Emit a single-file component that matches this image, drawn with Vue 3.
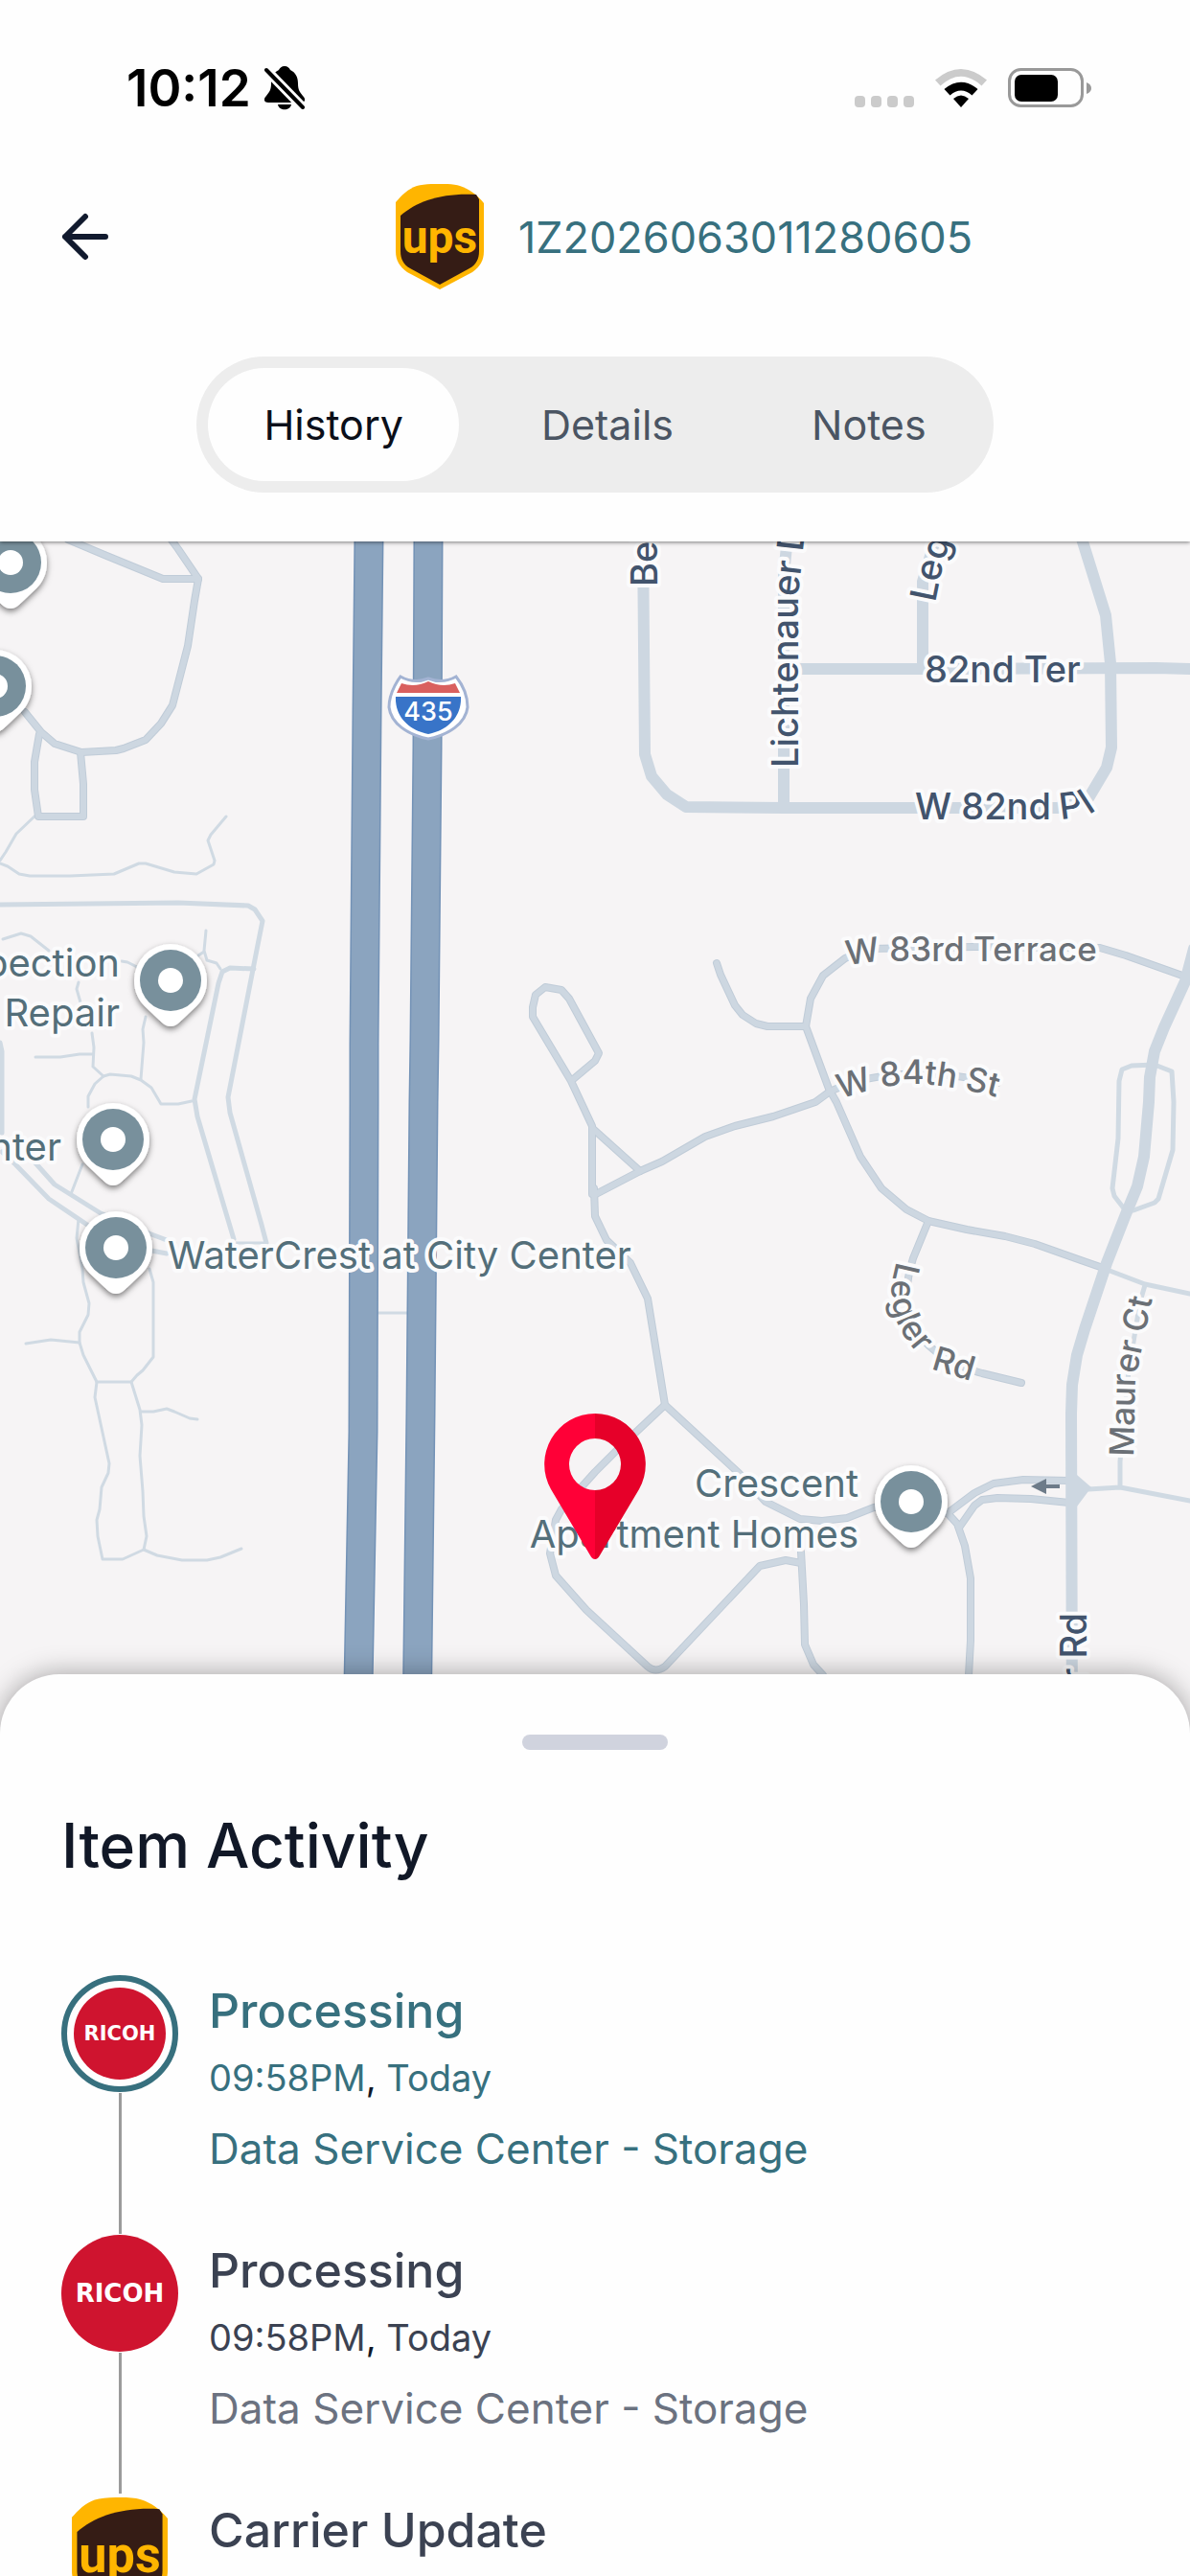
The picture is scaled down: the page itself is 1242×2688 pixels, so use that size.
<script setup>
import { ref } from "vue";

const tabs = ['History', 'Details', 'Notes']
const activeTab = ref('History')

const trackingNumber = '1Z2026063011280605'

const activity = [
  { id: 1, logo: 'ricoh', title: 'Processing', time: '09:58PM', day: 'Today', place: 'Data Service Center - Storage', current: true },
  { id: 2, logo: 'ricoh', title: 'Processing', time: '09:58PM', day: 'Today', place: 'Data Service Center - Storage' },
  { id: 3, logo: 'ups', title: 'Carrier Update', time: '', day: '', place: '' },
]

// Roads, grouped by how wide they are drawn
const footways = [
  'M38 850 17 870 6 889 0 898',
  'M0 901 8 904 20 912 31 914H73L119 912 145 901H152L182 910 205 912 223 902 224 898 217 877 220 871 236 852',
  'M3 980 22 974 32 977 51 992',
  'M215 971 213 992 216 1002 226 1005 230 1011M213 993 207 997',
  'M127 1003 133 1004 143 1009',
  'M82 1025 80 1032 84 1046',
  'M96 1078 98 1093 97 1113 108 1123',
  'M37 1103H63L83 1100H97',
  'M152 1061 149 1074 150 1088 147 1126',
  'M92 1155V1144L99 1131 108 1123 115 1121 137 1123 147 1127 158 1135 168 1152H186L200 1149',
  'M86 1215 74 1246M82 1272 80 1292 86 1324 87 1338 93 1360 92 1372 83 1390V1401L87 1414 101 1442H137L143 1435 149 1430 160 1416V1338L156 1324',
  'M27 1402 53 1398 83 1401',
  'M101 1442 99 1458 114 1527 113 1537 106 1552 104 1575 101 1586 102 1603 107 1627H128L150 1617 153 1603 150 1582 149 1556 146 1519 148 1487 146 1471 137 1442',
  'M147 1473H160L174 1470 182 1473 198 1480 206 1481',
  'M150 1617 164 1623 190 1628H216L230 1625 252 1616',
  'M395 1370H426M244 1297H278',
]
const lanes = [
  'M0 944 186 942 259 945 266 949 274 961 269 986 238 1145 240 1161 273 1278 278 1297',
  'M265 1011 240 1010 232 1014 228 1026 203 1147 206 1165 244 1293',
  'M0 1088 2 1097V1182',
  'M2 1202 16 1215 51 1251 91 1278 158 1305 174 1308',
  'M32 1208 57 1236 105 1266 158 1288 182 1297',
  'M1167 1188 1168 1128 1171 1116 1181 1112 1205 1111 1223 1118 1225 1150 1224 1200 1209 1251 1205 1255 1183 1263 1173 1261 1163 1248 1161 1240Z',
  'M1153 1324 1195 1340 1242 1350',
  'M1195 1341 1190 1358 1178 1430 1169 1525V1552M1136 1554 1169 1552 1242 1566',
]
const streets = [
  'M71 563 109 579 170 604H207',
  'M178 562 186 573 207 604 203 627 196 674 180 736 168 755 152 772 129 781 121 783 85 785 57 776 43 764 26 743',
  'M41 766 36 795V824L40 852H87V818L84 785',
  'M596 1128 556 1061V1051L559 1038 569 1030 586 1033 594 1042 625 1099 621 1107 596 1128 618 1175V1246',
  'M619 1178 668 1222',
  'M622 1246 668 1222 691 1212 736 1186 767 1175 807 1165 851 1150 866 1139',
  'M620 1240 621 1269 633 1294 658 1318 676 1355 694 1466 771 1537 799 1567 835 1585 858 1587 884 1584 912 1573 951 1567',
  'M694 1466 645 1512 621 1536 586 1575 580 1586 574 1621 580 1644 612 1680 676 1739Q684 1746 694 1739L793 1634 820 1628 836 1631',
  'M836 1619 839 1674 840 1716 849 1737 859 1748',
  'M1011 1748 1013 1712V1647L1007 1613 999 1590 989 1579 1017 1558 1037 1548 1068 1544 1116 1545',
  'M1001 1594 1017 1571 1025 1565 1041 1563 1076 1564 1116 1568',
  'M748 1005 752 1017 767 1049 775 1059 789 1068 801 1071H841L846 1042 859 1018 882 1000 906 990 1017 988 1148 989 1175 997 1237 1019',
  'M841 1071 865 1136 873 1150 898 1207 920 1240 946 1262 969 1274 1009 1283 1049 1290 1080 1298 1128 1315 1154 1324',
  'M969 1274 953 1313C938 1360 945 1410 1025 1433L1066 1443',
  'M866 1139C910 1118 970 1115 1041 1130',
]
const avenues = [
  'M671 560 673 787 680 810 696 829 716 842 819 843H1104L1136 833 1155 801 1160 780 1159 692 1154 642 1129 562',
  'M822 560 818 600V843M818 698H963L1207 697 1242 698M963 697V607L977 560',
  'M1246 990 1237 1024 1215 1072 1205 1097 1200 1124 1199 1150 1194 1207 1187 1238 1175 1267 1155 1318 1132 1387 1124 1414 1119 1445 1118 1475 1119 1810',
]
const highways = [
  'M385 560 383 745 380 1090V1150L379 1494 373 1810',
  'M447 560 446 780 443 1086 442 1150 439 1475 435 1810',
]

const places = [
  { x: 11, y: 587 },
  { x: -5, y: 716 },
  { x: 178, y: 1023 },
  { x: 118, y: 1189 },
  { x: 121, y: 1302 },
  { x: 951, y: 1567 },
]
</script>

<template>
  <div class="app">
    <header class="top">
      <div class="status-bar">
        <div class="clock">
          <span>10:12</span>
          <svg class="bell" viewBox="0 0 42 46" aria-hidden="true">
            <path d="M21 0c-3 0-5 2-6 4C9 7 7 12 7 18c0 7-2 9-5 13-4 4-2 7 2 7h34c4 0 6-3 2-7-3-4-5-6-5-13 0-6-2-11-8-14-1-2-3-4-6-4zM14 40h14c-1 7-13 7-14 0z" />
            <path class="bell-gap" d="M2 4 40 43" />
            <path class="bell-slash" d="M2 4 40 43" />
          </svg>
        </div>
        <div class="indicators">
          <div class="dots"><i></i><i></i><i></i><i></i></div>
          <svg class="wifi" viewBox="0 0 54 40" aria-hidden="true">
            <path fill="#cbcbcb" d="M0 11.500Q27-11.500 54 11.500L48.500 17.500Q27-2 5.500 17.500Z" />
            <path d="M9.500 21Q27 6.500 44.500 21L38.500 27.500Q27 17.500 15.500 27.500Z" />
            <path d="M19 31Q27 24 35 31L27 40Z" />
          </svg>
          <svg class="battery" viewBox="0 0 88 42" aria-hidden="true">
            <rect x="1.500" y="1.500" width="76" height="38" rx="12" fill="none" stroke="#999" stroke-width="3" />
            <rect x="7" y="7" width="45" height="28" rx="7" />
            <path fill="#999" d="M82 15q5 2 5 6t-5 6z" />
          </svg>
        </div>
      </div>

      <div class="nav">
        <button class="back" type="button" aria-label="Back">
          <svg viewBox="0 0 50 50" aria-hidden="true"><path d="M25 4 4 25 25 46M4 25H46" /></svg>
        </button>
        <div class="shipment">
          <svg class="ups-logo" viewBox="0 0 92 110" aria-hidden="true">
            <use href="#ups-shield" />
            <text class="ups-word" x="46" y="72">ups</text>
          </svg>
          <span class="number">{{ trackingNumber }}</span>
        </div>
      </div>

      <div class="tabs" role="tablist">
        <button
          v-for="tab in tabs"
          :key="tab"
          type="button"
          role="tab"
          class="tab"
          :class="{ active: tab === activeTab }"
          :aria-selected="tab === activeTab"
          @click="activeTab = tab"
        >{{ tab }}</button>
      </div>
    </header>

    <svg class="map" viewBox="0 565 1242 1244" role="img" aria-label="Map">
      <defs>
        <g id="ups-shield">
          <path fill="#ffb500" d="M0 19C6 12 13 5 22 2 34-1 58-1 67 2 76 5 84 10 92 20V70C92 80 88 86 80 92L46 110 12 92C4 86 0 80 0 70Z" />
          <path fill="#351c15" d="M5 33C22 18 48 9 84 11L87 16V70C87 78 84 84 77 88L46 105 15 88C8 84 5 78 5 70Z" />
        </g>
        <filter id="soft" x="-30%" y="-30%" width="160%" height="170%">
          <feDropShadow dx="0" dy="3" stdDeviation="3" flood-color="#000" flood-opacity="0.5" />
        </filter>
        <path id="way-82pl" d="M955 855H1110L1134 852 1180 822" />
        <path id="way-licht" d="M833 801V620L843 530" />
        <path id="way-leg" d="M976 629 984 590 1010 515" />
        <path id="way-83" d="M884 1007 914 1003H1160" />
        <path id="way-84" d="M877 1147Q925 1131 955 1131 990 1131 1060 1150" />
        <path id="way-legler" d="M936 1316C926 1350 930 1374 945 1396 956 1412 968 1425 980 1431L1050 1452" />
        <path id="way-maurer" d="M1183 1520 1185 1440 1208 1330" />
      </defs>

      <rect x="0" y="565" width="1242" height="1244" fill="#f6f4f5" />

      <g class="roads">
        <path v-for="d in footways" :key="d" :d="d" class="footway" />
        <path v-for="d in lanes" :key="d" :d="d" class="lane" />
        <path v-for="d in streets" :key="'c' + d" :d="d" class="street-edge" />
        <path v-for="d in streets" :key="d" :d="d" class="street" />
        <path v-for="d in avenues" :key="d" :d="d" class="avenue" />
        <path d="M1124 1539 1139 1552 1124 1572Z" fill="#cdd7e1" />
        <path v-for="d in highways" :key="'c' + d" :d="d" class="highway-edge" />
        <path v-for="d in highways" :key="d" :d="d" class="highway" />
      </g>

      <path d="M1076 1551 1092 1543V1549H1106V1553H1092V1559Z" fill="#6d7b89" />

      <g class="shield">
        <path fill="#fff" stroke="#a3b3d3" stroke-width="3" d="M418 706Q432 714 447 708 462 714 476 706 488 721 488 738C486 755 468 767 447 771 426 767 408 755 406 738 406 721 418 706 418 706Z" />
        <path fill="#d9605f" d="M419 713Q433 718 447 711 461 718 475 713L480 723H414Z" />
        <path fill="#3874c8" d="M413 727H481C482 748 467 762 447 766 427 762 412 748 413 727Z" />
        <text x="447" y="752">435</text>
      </g>

      <g class="road-name major">
        <text transform="translate(686 612) rotate(-90)">Bell</text>
        <text><textPath href="#way-licht">Lichtenauer Dr</textPath></text>
        <text><textPath href="#way-leg">Legler</textPath></text>
        <text x="965" y="712">82nd Ter</text>
        <text><textPath href="#way-82pl">W 82nd P<tspan dx="6">l</tspan></textPath></text>
        <text class="end" transform="translate(1134 1683) rotate(-90)">Maurer Rd</text>
      </g>
      <g class="road-name">
        <text><textPath href="#way-83">W 83rd Terrace</textPath></text>
        <text><textPath href="#way-84">W 84th St</textPath></text>
        <text><textPath href="#way-legler">Legler <tspan dx="10">Rd</tspan></textPath></text>
        <text><textPath href="#way-maurer">Maurer Ct</textPath></text>
      </g>

      <g class="place-name">
        <text class="end" x="125" y="1019">Inspection</text>
        <text class="end" x="125" y="1071">Repair</text>
        <text class="end" x="64" y="1211">Center</text>
        <text x="175" y="1324">WaterCrest at City Center</text>
        <text class="end" x="896" y="1562">Crescent</text>
        <text class="end" x="896" y="1615">Apartment Homes</text>
      </g>

      <g v-for="p in places" :key="p.x" :transform="`translate(${p.x} ${p.y})`">
        <path filter="url(#soft)" fill="#fff" d="M-38 0A38 38 0 1 1 38 0C38 12 33 21 27 27L9 44Q0 52-9 44L-27 27C-33 21-38 12-38 0Z" />
        <circle r="32" fill="#78909c" />
        <circle r="13" fill="#fff" />
      </g>

      <path fill="#ff0037" d="M621 1475A53 53 0 0 0 575 1554L616 1623Q618 1627 621 1627V1555A27 27 0 0 1 621 1501Z" />
      <path fill="#e60029" d="M621 1475A53 53 0 0 1 667 1554L626 1623Q624 1627 621 1627V1555A27 27 0 0 0 621 1501Z" />
    </svg>

    <main class="sheet">
      <div class="handle"></div>
      <h1>Item Activity</h1>
      <ol class="timeline">
        <li v-for="item in activity" :key="item.id" class="entry" :class="{ current: item.current }">
          <div class="rail">
            <div v-if="item.logo === 'ricoh'" class="badge"><span>RICOH</span></div>
            <svg v-else class="ups-logo large" viewBox="0 0 92 110" aria-hidden="true">
              <use href="#ups-shield" />
              <text class="ups-word" x="46" y="72">ups</text>
            </svg>
            <div class="line"></div>
          </div>
          <div class="body">
            <h2>{{ item.title }}</h2>
            <p v-if="item.time" class="when"><span>{{ item.time }}</span>, <span>{{ item.day }}</span></p>
            <p v-if="item.place" class="place">{{ item.place }}</p>
          </div>
        </li>
      </ol>
    </main>
  </div>
</template>

<style>
body {
  margin: 0;
  background: #fefefe;
}
</style>

<style scoped>
.app {
  display: flex;
  flex-direction: column;
  height: 100vh;
  overflow: hidden;
  background: #fefefe;
  color: #111827;
  font-family: Inter, 'Liberation Sans', sans-serif;
}

button {
  border: 0;
  background: none;
  padding: 0;
  font: inherit;
  cursor: pointer;
}

.top {
  position: relative;
  z-index: 1;
  padding-bottom: 51px;
  background: #fefefe;
  box-shadow: 0 1px 4px rgba(0, 0, 0, 0.5);
}

.status-bar {
  display: flex;
  justify-content: space-between;
  align-items: center;
  height: 54px;
  padding: 65px 102px 0 132px;
  color: #000;
}
.clock {
  display: flex;
  align-items: center;
  gap: 14px;
  font-size: 53px;
  line-height: 54px;
  font-weight: 600;
}
.bell {
  width: 42px;
  height: 46px;
}
.bell-gap {
  stroke: #fefefe;
  stroke-width: 10;
}
.bell-slash {
  stroke: #000;
  stroke-width: 4;
  stroke-linecap: round;
}
.indicators {
  display: flex;
  align-items: center;
}
.dots {
  display: flex;
  gap: 6px;
  padding-top: 28px;
}
.dots i {
  width: 11px;
  height: 12px;
  border-radius: 4px;
  background: #cbcbcb;
}
.wifi {
  width: 54px;
  height: 40px;
  margin: 0 22px;
}
.battery {
  width: 88px;
  height: 42px;
}

.nav {
  display: flex;
  align-items: center;
  margin-top: 73px;
  padding-left: 64px;
}
.back {
  display: flex;
}
.back svg {
  width: 50px;
  height: 50px;
  fill: none;
  stroke: #111a2e;
  stroke-width: 6;
  stroke-linecap: round;
  stroke-linejoin: round;
}
.shipment {
  flex: 1;
  display: flex;
  align-items: center;
  justify-content: center;
  gap: 36px;
  padding-left: 72px;
}
.ups-logo {
  width: 92px;
  height: 110px;
}
.ups-logo.large {
  width: 100px;
  height: 120px;
  margin-top: 3px;
}
.ups-word {
  fill: #ffb500;
  font-family: Roboto, sans-serif;
  font-size: 48px;
  font-weight: 700;
  text-anchor: middle;
}
.number {
  color: #37707e;
  font-size: 45px;
}

.tabs {
  display: flex;
  gap: 28px;
  width: fit-content;
  margin: 70px auto 0;
  padding: 12px;
  border-radius: 71px;
  background: #ededed;
}
.tab {
  padding: 0 58px;
  border-radius: 59px;
  color: #4b5563;
  font-size: 43px;
  line-height: 118px;
}
.tab.active {
  background: #fefefe;
  color: #0b0f19;
}

.map {
  display: block;
  flex: none;
  width: 100%;
}
.roads path[class] {
  fill: none;
  stroke-linecap: round;
  stroke-linejoin: round;
}
.footway {
  stroke: #d0dae3;
  stroke-width: 3;
}
.lane {
  stroke: #d0dae3;
  stroke-width: 5;
}
.street-edge {
  stroke: #c0ccd8;
  stroke-width: 8;
}
.street {
  stroke: #cdd7e1;
  stroke-width: 6;
}
.avenue {
  stroke: #cdd7e1;
  stroke-width: 12;
}
.highway-edge {
  stroke: #7392b6;
  stroke-width: 31;
}
.highway {
  stroke: #8ba4bf;
  stroke-width: 28;
}
.shield text {
  fill: #fff;
  font-size: 27px;
  font-weight: 500;
  text-anchor: middle;
}
.road-name,
.place-name {
  stroke: #fbfbfc;
  stroke-width: 8;
  stroke-linejoin: round;
  paint-order: stroke;
}
.road-name {
  fill: #6b7076;
  font-size: 35px;
  font-weight: 500;
}
.road-name.major {
  fill: #42546d;
  font-size: 38px;
}
.place-name {
  fill: #546f7a;
  font-size: 40px;
}
.end {
  text-anchor: end;
}

.sheet {
  position: relative;
  z-index: 1;
  flex: 1;
  min-height: 0;
  margin-top: -62px;
  padding: 63px 64px 0;
  border-radius: 62px 62px 0 0;
  background: #fefefe;
  box-shadow: 0 0 28px rgba(0, 0, 0, 0.35);
}
.handle {
  width: 152px;
  height: 16px;
  margin: 0 auto;
  border-radius: 8px;
  background: #d0d3de;
}
h1 {
  margin: 64px 0 0;
  font-size: 64px;
  line-height: 72px;
  font-weight: 500;
}
.timeline {
  margin: 99px 0 0;
  padding: 0;
  list-style: none;
}
.entry {
  display: flex;
  gap: 32px;
  height: 271px;
  color: #3b4252;
}
.rail {
  display: flex;
  flex-direction: column;
  align-items: center;
  width: 122px;
}
.badge {
  display: flex;
  align-items: center;
  justify-content: center;
  box-sizing: border-box;
  width: 122px;
  height: 122px;
  border-radius: 50%;
  background: #cf142f;
  color: #fefefe;
  font-family: 'DejaVu Sans', sans-serif;
  font-size: 26px;
  font-weight: 700;
}
.current .badge {
  border: 6px solid #37707e;
  padding: 7px;
  background-clip: content-box;
  font-size: 21px;
}
.line {
  flex: 1;
  width: 3px;
  margin: 1px 0;
  background: #9b9b9b;
}
.body {
  padding-top: 5px;
}
h2 {
  margin: 0;
  font-size: 50px;
  line-height: 64px;
  font-weight: 500;
}
p {
  margin: 0;
}
.when {
  margin-top: 14px;
  color: #111827;
  font-size: 38px;
  line-height: 48px;
}
.when span {
  color: #3b4252;
}
.place {
  margin-top: 22px;
  color: #6b7280;
  font-size: 44px;
  line-height: 56px;
}
.current h2,
.current .when span,
.current .place {
  color: #37707e;
}
</style>
